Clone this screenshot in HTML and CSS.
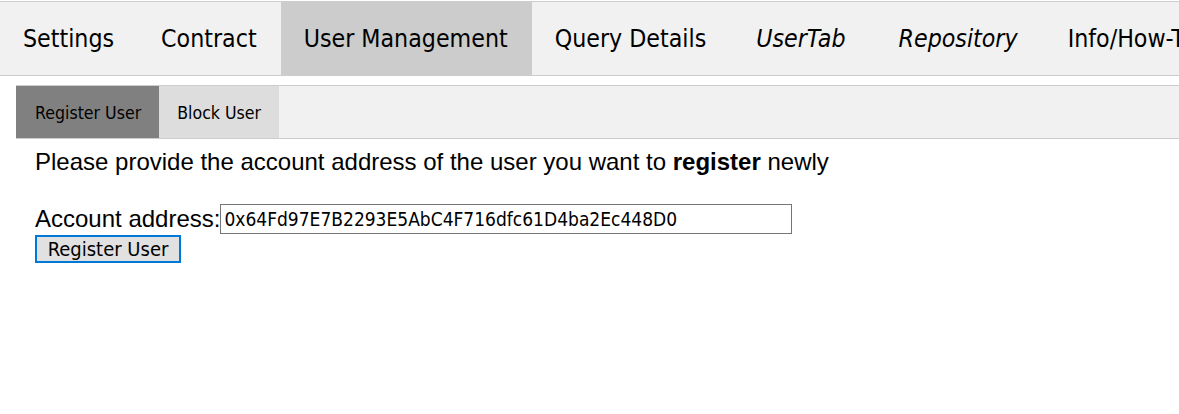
FILE: index.html
```html
<!DOCTYPE html>
<html>
<head>
<meta charset="utf-8">
<link rel="stylesheet" href="styles.css">
</head>
<body>
<div class="page">
  <nav class="tabs">
    <button class="tab">Settings</button>
    <button class="tab">Contract</button>
    <button class="tab active">User Management</button>
    <button class="tab">Query Details</button>
    <button class="tab ital">UserTab</button>
    <button class="tab ital">Repository</button>
    <button class="tab">Info/How-To</button>
  </nav>
  <div class="panel">
    <div class="subtabs">
      <button class="subtab active">Register User</button>
      <button class="subtab alt">Block User</button>
    </div>
    <div class="content">
      <p class="intro">Please provide the account address of the user you want to <b>register</b> newly</p>
      <div class="field"><label class="lbl">Account address:</label><input class="addr" type="text" value="0x64Fd97E7B2293E5AbC4F716dfc61D4ba2Ec448D0"></div>
      <button class="btn">Register User</button>
    </div>
  </div>
</div>
</body>
</html>
```

FILE: styles.css
```css
html, body {
  margin: 0;
  padding: 0;
  background: #fff;
  overflow: hidden;
}
.page {
  width: 1400px;
  padding-top: 1px;
}
.tabs {
  display: flex;
  background: #f1f1f1;
  border-top: 1px solid #ccc;
  border-bottom: 1px solid #ccc;
  height: 73px;
  white-space: nowrap;
}
.tab {
  font-family: "DejaVu Sans Condensed", "DejaVu Sans", sans-serif;
  font-size: 24.7px;
  color: #000;
  background: transparent;
  border: none;
  padding: 0 24px 0 23px;
  margin: 0;
  height: 73px;
}
.tab.ital { font-style: italic; padding: 0 27px 0 26px; }
.tab.active { background: #ccc; }
.panel {
  margin-left: 16px;
  margin-top: 9px;
}
.subtabs {
  display: flex;
  background: #f1f1f1;
  border-top: 1px solid #ccc;
  border-bottom: 1px solid #ccc;
  height: 52px;
}
.subtab {
  font-family: "DejaVu Sans Condensed", "DejaVu Sans", sans-serif;
  font-size: 17.6px;
  color: #000;
  border: none;
  margin: 0;
  padding: 2px 18px 0 18px;
  height: 52px;
}
.subtab.active { background: #808080; padding-left: 19px; }
.subtab.alt { background: #ddd; }
.content {
  padding-left: 19px;
  font-family: "Liberation Sans", Arial, sans-serif;
  font-size: 24px;
}
.intro {
  margin: 11px 0 30px 0;
  line-height: 24px;
}
.field {
  display: flex;
  align-items: center;
  height: 30px;
}
.lbl { line-height: 24px; }
.addr {
  font-family: "DejaVu Sans Condensed", "DejaVu Sans", sans-serif;
  font-size: 19px;
  width: 572px;
  height: 30px;
  box-sizing: border-box;
  border: 1px solid #767676;
  padding: 0 3px;
  margin: 0;
  color: #000;
}
.btn {
  display: block;
  margin-top: 1px;
  font-family: "DejaVu Sans Condensed", "DejaVu Sans", sans-serif;
  font-size: 20px;
  width: 146px;
  height: 28px;
  box-sizing: border-box;
  background: #e1e1e1;
  border: 2px solid #0078d7;
  padding: 0;
  color: #000;
  line-height: 22px;
}
```
